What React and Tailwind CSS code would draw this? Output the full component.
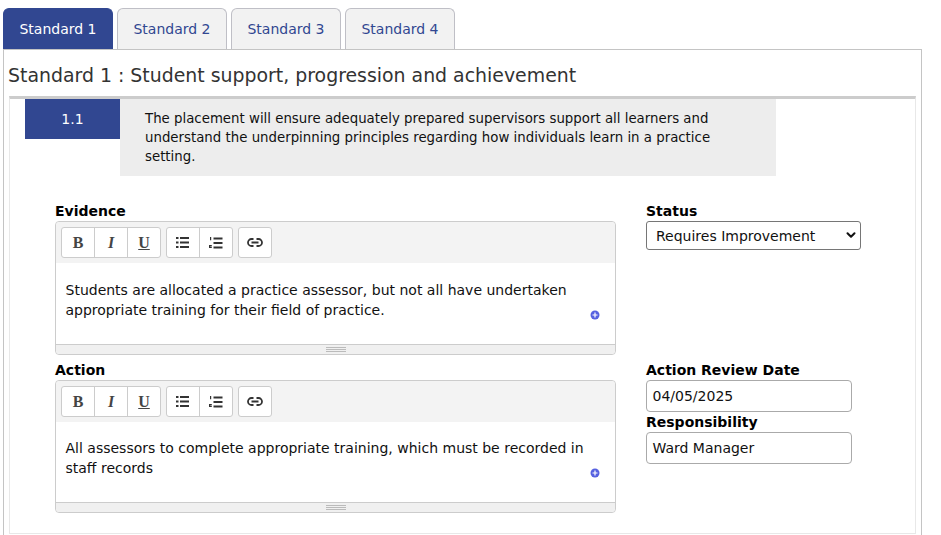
import React from "react";
import { ChevronDown } from "lucide-react";

const tabs = ["Standard 1", "Standard 2", "Standard 3", "Standard 4"];

const Btn = ({ children }) => (
    <div className="flex-1 flex items-center justify-center text-[#444]">{children}</div>
);

const Toolbar = () => (
    <div className="h-[41px] bg-[#f3f3f3] flex items-start gap-[5px] pl-[5px] pt-[5px] rounded-t-[4px]">
        <div className="flex w-[100px] h-[31px] bg-white border border-[#ccc] rounded-[3px] divide-x divide-[#ccc]">
            <Btn><span className="font-['Liberation_Serif',serif] font-bold text-[16px]">B</span></Btn>
            <Btn><span className="font-['Liberation_Serif',serif] font-bold italic text-[16px]">I</span></Btn>
            <Btn><span className="font-['Liberation_Serif',serif] font-bold underline text-[16px]">U</span></Btn>
        </div>
        <div className="flex w-[67px] h-[31px] bg-white border border-[#ccc] rounded-[3px] divide-x divide-[#ccc]">
            <Btn>
                <svg width="14" height="11" viewBox="0 0 14 11" fill="#333">
                    <path d="M0 0h2.5v2H0zM0 4.5h2.5v2H0zM0 9h2.5v2H0zM4 0h9v2H4zM4 4.5h9v2H4zM4 9h9v2H4z" />
                </svg>
            </Btn>
            <Btn>
                <svg width="14" height="12" viewBox="0 0 14 12" fill="#333">
                    <path d="M4.5 0.5h9v2h-9zM4.5 5h9v2h-9zM4.5 9.5h9v2h-9z" />
                    <path d="M1 0h1.2v3.2H1zM0 8h2.8v1.2H1.2v.6h1.6V11H0z" />
                </svg>
            </Btn>
        </div>
        <div className="flex w-[34px] h-[31px] bg-white border border-[#ccc] rounded-[3px]">
            <Btn>
                <svg width="16" height="9" viewBox="0 0 16 9" fill="none" stroke="#333" strokeWidth="1.8">
                    <path d="M6.5 1H4.5a3.5 3.5 0 0 0 0 7h2M9.5 1h2a3.5 3.5 0 0 1 0 7h-2M4.5 4.5h7" />
                </svg>
            </Btn>
        </div>
    </div>
);

const Editor = ({ text, height, textTop }) => (
    <div className={`relative ${height} border border-[#ccc] rounded-[4px] bg-white flex flex-col`}>
        <Toolbar />
        <div className={`flex-1 pl-[9.5px] pr-[10px] ${textTop} text-[14px] leading-[20px] text-[#111]`}>{text}</div>
        <svg className="absolute right-[15px] bottom-[34px]" width="10" height="10" viewBox="0 0 10 10">
            <circle cx="5" cy="5" r="4.5" fill="#5661e0" />
            <path d="M5 2.5v5M2.5 5h5" stroke="#fff" strokeWidth="1.2" />
        </svg>
        <div className="h-[10px] bg-[#f0f0f0] border-t border-[#ccc] rounded-b-[4px] flex flex-col items-center justify-center gap-[1px]">
            <div className="w-[20px] h-px bg-[#bbb]" />
            <div className="w-[20px] h-px bg-[#bbb]" />
            <div className="w-[20px] h-px bg-[#bbb]" />
        </div>
    </div>
);

const App = () => {
    return (
        <div className="w-[941px] h-[535px] overflow-hidden bg-white pl-[3px] pt-[8px] font-['DejaVu_Sans',sans-serif] text-[14px] text-[#111]">
            <div className="flex gap-[4px] h-[41px]">
                {tabs.map((t, i) => (
                    <div
                        key={t}
                        className={`w-[110px] flex items-center justify-center rounded-t-[6px] border border-b-0 ${i === 0 ? "bg-[#314791] border-[#314791] text-white" : "bg-[#f2f2f2] border-[#bfbfc6] text-[#314791]"}`}
                    >
                        {t}
                    </div>
                ))}
            </div>
            <div className="w-[919px] h-[600px] border border-[#c4c4c4] pl-[5px] pr-[5px]">
                <div className="h-[46px] -ml-px pt-[12px] text-[18.9px] leading-[26px] text-[#333]">
                    Standard 1 : Student support, progression and achievement
                </div>
                <div className="w-[907px] h-[438px] border-x border-b border-[#e8e8e8] border-t-[3px] border-t-[#ccc]">
                    <div className="flex pl-[15px]">
                        <div className="w-[95px] h-[40px] bg-[#314791] text-white text-[14px] flex items-center justify-center">1.1</div>
                        <div className="w-[656px] h-[77px] bg-[#ededed] pl-[25px] pr-[40px] pt-[10px] text-[13.33px] leading-[19px] text-[#111]">
                            The placement will ensure adequately prepared supervisors support all learners and understand the underpinning principles regarding how individuals learn in a practice setting.
                        </div>
                    </div>
                    <div className="pl-[45px] pt-[26px] flex flex-col gap-[6px]">
                        <div className="flex gap-[30px]">
                            <div className="w-[561px]">
                                <div className="font-bold leading-[19px] text-[14px] text-black">Evidence</div>
                                <Editor height="h-[134px]" textTop="pt-[17px]" text="Students are allocated a practice assessor, but not all have undertaken appropriate training for their field of practice." />
                            </div>
                            <div>
                                <div className="font-bold leading-[19px] text-black">Status</div>
                                <div className="relative w-[215px] h-[29px] border border-[#767676] rounded-[3px] pl-[9px] pt-px flex items-center">
                                    Requires Improvement
                                    <ChevronDown className="absolute right-[2px] top-[6px]" size={14} strokeWidth={3.5} />
                                </div>
                            </div>
                        </div>
                        <div className="flex gap-[30px]">
                            <div className="w-[561px]">
                                <div className="font-bold leading-[19px] text-black">Action</div>
                                <Editor height="h-[133px]" textTop="pt-[16px]" text="All assessors to complete appropriate training, which must be recorded in staff records" />
                            </div>
                            <div>
                                <div className="font-bold leading-[19px] text-black">Action Review Date</div>
                                <div className="w-[206px] h-[32px] border border-[#aaa] rounded-[4px] pl-[5.5px] flex items-center">04/05/2025</div>
                                <div className="font-bold leading-[20px] text-black">Responsibility</div>
                                <div className="w-[206px] h-[32px] border border-[#aaa] rounded-[4px] pl-[5.5px] flex items-center">Ward Manager</div>
                            </div>
                        </div>
                    </div>
                </div>
            </div>
        </div>
    );
};

export default App;
